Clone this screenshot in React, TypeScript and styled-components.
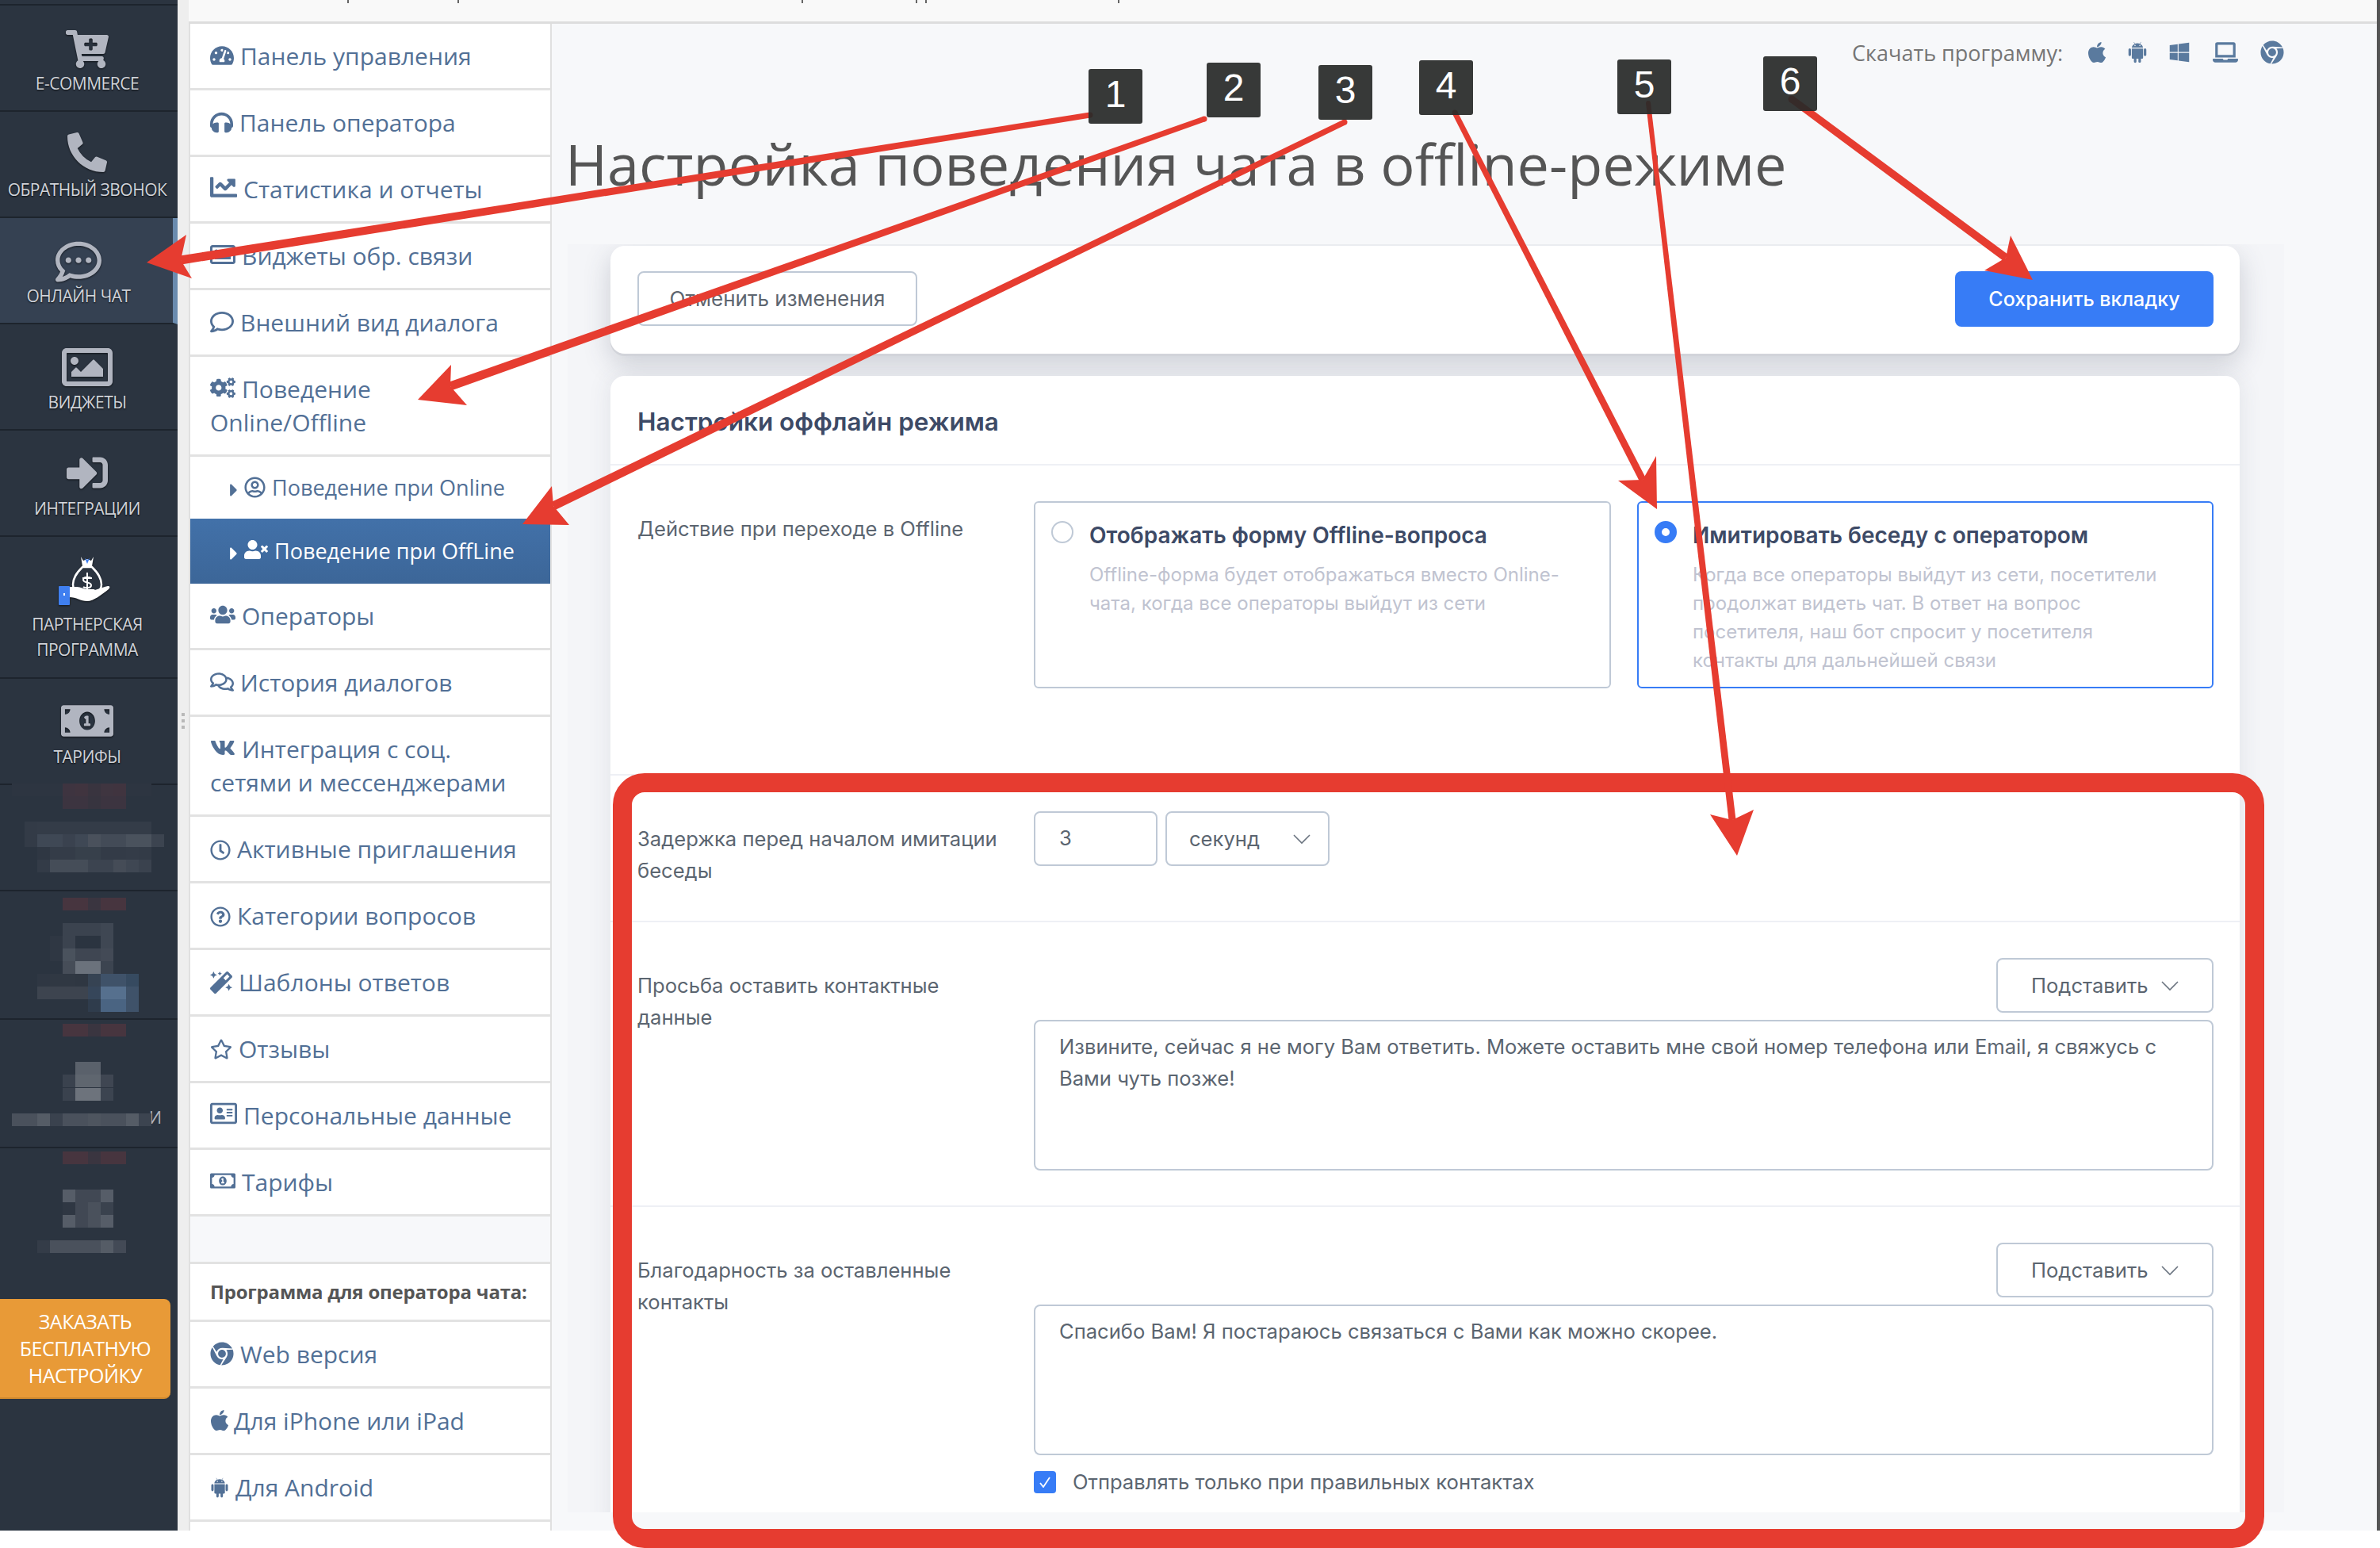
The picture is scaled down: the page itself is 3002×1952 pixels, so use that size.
import React from 'react';
import styled, { createGlobalStyle } from 'styled-components';
import {
  FaTachometerAlt, FaHeadphones, FaChartLine, FaRegImage, FaRegComment, FaCogs, FaRegUserCircle, FaUserTimes,
  FaUsers, FaRegComments, FaVk, FaRegClock, FaRegQuestionCircle, FaMagic, FaRegStar, FaRegAddressCard,
  FaRegMoneyBillAlt, FaChrome, FaApple, FaWindows, FaLaptop, FaCaretRight, FaCartPlus, FaPhoneAlt,
  FaRegCommentDots, FaSignInAlt, FaMoneyBillAlt,
} from 'react-icons/fa';
import { AiFillAndroid } from 'react-icons/ai';

const GlobalStyle = createGlobalStyle`
  html, body { margin: 0; padding: 0; background: #fff; }
  * { box-sizing: border-box; }
`;

const Page = styled.div`
  position: relative;
  width: 3002px;
  height: 1952px;
  overflow: hidden;
  background: #fff;
`;

const Shell = styled.div`
  display: flex;
  height: 1930px;
  overflow: hidden;
  border-right: 4px solid #555;
`;

/* left dark rail */
const Rail = styled.aside`
  position: relative;
  flex: 0 0 224px;
  background: #2b3440;
  font-family: 'Open Sans', sans-serif;
`;

const RailList = styled.div`
  display: flex;
  flex-direction: column;
  margin-top: -127px;
`;

const RailItem = styled.div<{ $h: number; $active?: boolean }>`
  height: ${p => p.$h}px;
  display: flex;
  flex-direction: column;
  align-items: center;
  padding-top: 31px;
  padding-right: ${p => (p.$active ? '20px' : '4px')};
  background: ${p => (p.$active ? '#354152' : 'transparent')};
  border-bottom: 2px solid #1d242d;
  border-right: ${p => (p.$active ? '6px solid #6a8bae' : '0')};
  color: #b1b5c0;
  svg { filter: drop-shadow(0 1px 1px rgba(0, 0, 0, 0.6)); }
`;

const RailLabel = styled.span`
  margin-top: 3px;
  font-size: 21px;
  line-height: 32px;
  letter-spacing: -0.5px;
  color: #d0d3d9;
  text-align: center;
  text-transform: uppercase;
  white-space: pre-line;
  text-shadow: 0 1px 2px rgba(0, 0, 0, 0.8);
`;

const RailIconBox = styled.span<{ $h?: number; $lift?: number }>`
  height: ${p => p.$h ?? 48}px;
  padding-bottom: ${p => p.$lift ?? 0}px;
  display: flex;
  align-items: center;
  justify-content: center;
`;

const BlurTail = styled.span`
  align-self: flex-end;
  margin-top: 76px;
  padding-right: 16px;
  font-size: 21px;
  line-height: 32px;
  color: #b1b5c0;
`;

const MosaicLayer = styled.svg`
  position: absolute;
  left: 0;
  top: 0;
`;

const OrderButton = styled.div`
  position: absolute;
  left: 0;
  top: 1638px;
  width: 215px;
  height: 126px;
  display: flex;
  align-items: center;
  justify-content: center;
  text-align: center;
  background: #e89a37;
  border-bottom: 2px solid #d28a2e;
  border-radius: 0 8px 8px 0;
  color: #fff;
  font-size: 25px;
  line-height: 34px;
  letter-spacing: -0.5px;
`;

const Gutter = styled.div`
  position: relative;
  flex: 0 0 14px;
  background: #eee;
`;

const GripDots = styled.div`
  position: absolute;
  left: 5px;
  top: 899px;
  width: 4px;
  height: 20px;
  background: repeating-linear-gradient(#b9b9b9 0 4px, transparent 4px 8px);
`;

const Workspace = styled.div`
  flex: 1;
  display: flex;
  flex-direction: column;
  min-width: 0;
`;

const TopStrip = styled.div`
  flex: 0 0 30px;
  display: flex;
  align-items: flex-start;
  background: #f9f9f9;
  border-bottom: 3px solid #ddd;
`;

/* the page above was cropped: only the feet of a few letters stay visible */
const LetterFoot = styled.span<{ $left: number }>`
  flex: none;
  width: 2px;
  height: 4px;
  margin-left: ${p => p.$left}px;
  background: #666;
`;

const Columns = styled.div`
  flex: 1;
  display: flex;
  min-height: 0;
`;

const Menu = styled.nav`
  flex: 0 0 456px;
  background: #f7f8fa;
  border-left: 2px solid #e0e0e0;
  border-right: 2px solid #e0e0e0;
  font-family: 'Open Sans', sans-serif;
`;

const MenuItem = styled.a<{ $sub?: boolean; $active?: boolean; $h?: number }>`
  display: block;
  padding: ${p => (p.$active ? '20px 0 16px 42px' : p.$sub ? '18px 0 18px 42px' : '20px 24px 19px 25px')};
  height: ${p => (p.$h ? `${p.$h}px` : 'auto')};
  width: ${p => (p.$active ? '454px' : 'auto')};
  background: ${p => (p.$active ? 'linear-gradient(#4271a9, #3c6698)' : '#fff')};
  border-bottom: ${p => (p.$sub ? '0' : '3px solid #e2e2e2')};
  color: ${p => (p.$active ? '#fff' : '#527096')};
  font-size: ${p => (p.$sub ? 27 : 30)}px;
  line-height: 42px;
  white-space: ${p => (p.$sub ? 'nowrap' : 'normal')};
  svg {
    vertical-align: -3px;
    margin-right: 8px;
  }
`;

const Caret = styled(FaCaretRight)`
  && { margin-right: 0; vertical-align: -6px; }
`;

const AppleGlyph = styled(FaApple)`
  && { margin: 0 3px 0 -3px; }
`;

const AndroidGlyph = styled(AiFillAndroid)`
  && { margin: 0 6px 0 -2px; }
`;

const MenuGap = styled.div`
  height: 57px;
`;

const MenuHeading = styled.div`
  height: 76px;
  padding: 0 0 0 25px;
  background: #fff;
  border-top: 3px solid #e2e2e2;
  border-bottom: 3px solid #e2e2e2;
  color: #555;
  font-size: 24px;
  font-weight: 700;
  line-height: 70px;
  letter-spacing: -0.2px;
`;

const Main = styled.main`
  flex: 1;
  min-width: 0;
  background: #f7f8fa;
  font-family: Inter, sans-serif;
`;

const DownloadBar = styled.div`
  display: flex;
  justify-content: flex-end;
  align-items: center;
  height: 44px;
  margin-top: 14px;
  padding-right: 117px;
  color: #5a7a9e;
`;

const DownloadLabel = styled.span`
  margin-right: 28px;
  font-family: 'Open Sans', sans-serif;
  font-size: 27px;
  color: #757575;
`;

const DownloadIcon = styled.span<{ $gap: number }>`
  display: flex;
  margin-right: ${p => p.$gap}px;
`;

const Title = styled.h1`
  margin: 70px 0 0 17px;
  font-family: 'Open Sans', sans-serif;
  font-size: 72px;
  font-weight: 400;
  line-height: 96px;
  color: #555;
`;

const Panel = styled.section`
  height: 1599px;
  margin: 54px 117px 0 20px;
  padding: 2px 56px 0 54px;
  overflow: hidden;
  background: #f4f5f8;
`;

const Card = styled.div`
  background: #fff;
  border-radius: 18px;
  box-shadow: 0 3px 0 #d2d4da, 0 12px 34px rgba(60, 70, 90, 0.22);
`;

const ActionCard = styled(Card)`
  height: 136px;
  display: flex;
  justify-content: space-between;
  padding: 32px 33px 0 34px;
`;

const OutlineButton = styled.button`
  width: 353px;
  height: 69px;
  background: #fff;
  border: 2px solid #bfc9d6;
  border-radius: 8px;
  font: 26px Inter, sans-serif;
  color: #5e6670;
`;

const SaveButton = styled.button`
  width: 326px;
  height: 70px;
  background: #377cf6;
  border: 0;
  border-radius: 8px;
  font: 500 25px Inter, sans-serif;
  color: #fff;
`;

const SettingsCard = styled(Card)`
  margin-top: 28px;
  box-shadow: 0 0 30px rgba(60, 70, 90, 0.1);
`;

const CardHeader = styled.h2`
  height: 113px;
  margin: 0;
  padding: 0 34px;
  border-bottom: 2px solid #eef0f5;
  font-size: 31.5px;
  font-weight: 600;
  line-height: 116px;
  color: #3d4a66;
`;

const Row = styled.div<{ $h: number }>`
  display: grid;
  grid-template-columns: 500px 1fr;
  height: ${p => p.$h}px;
  padding: 45px 33px 0 34px;
  border-bottom: 2px solid #eef0f5;
`;

const RowLabel = styled.div`
  padding-top: 15px;
  padding-right: 30px;
  font-size: 25.6px;
  line-height: 40px;
  color: #5b6570;
`;

const Field = styled.div`
  display: flex;
  flex-direction: column;
  min-width: 0;
`;

const ChoiceGrid = styled.div`
  display: grid;
  grid-template-columns: 728px 727px;
  gap: 33px;
`;

const ChoiceCard = styled.div<{ $on?: boolean }>`
  position: relative;
  height: 236px;
  padding: 21px 40px 0 68px;
  border: 2px solid ${p => (p.$on ? '#377cf6' : '#bfc9d6')};
  border-radius: 6px;
`;

const Radio = styled.span<{ $on?: boolean }>`
  position: absolute;
  left: 20px;
  top: 23px;
  width: 28px;
  height: 28px;
  border-radius: 50%;
  background: #fff;
  border: ${p => (p.$on ? '9px solid #377cf6' : '2px solid #bfc9d6')};
`;

const ChoiceTitle = styled.div`
  font-size: 28px;
  font-weight: 600;
  line-height: 40px;
  color: #3d4a66;
`;

const ChoiceText = styled.div`
  margin-top: 12px;
  font-size: 24px;
  line-height: 36px;
  color: #c0c3d0;
`;

const Inline = styled.div`
  display: flex;
  gap: 10px;
`;

const TextInput = styled.div`
  width: 156px;
  height: 69px;
  padding-left: 30px;
  border: 2px solid #bfc9d6;
  border-radius: 8px;
  font-size: 25.6px;
  line-height: 63px;
  color: #5b6570;
`;

const SelectBox = styled.div`
  position: relative;
  display: flex;
  align-items: center;
  justify-content: space-between;
  width: 207px;
  height: 69px;
  padding: 0 22px 0 28px;
  border: 2px solid #bfc9d6;
  border-radius: 8px;
  font-size: 25.6px;
  color: #5b6570;
`;

const Chevron = () => (
  <svg width="22" height="14" viewBox="0 0 22 14" fill="none" stroke="#6b7480" strokeWidth="1.6">
    <path d="M1 2l10 10L21 2" />
  </svg>
);

const InsertButton = styled.div`
  align-self: flex-end;
  display: flex;
  align-items: center;
  justify-content: space-between;
  width: 274px;
  height: 69px;
  padding: 0 42px;
  border: 2px solid #bfc9d6;
  border-radius: 8px;
  font-size: 25.6px;
  color: #5b6570;
`;

const TextBox = styled.div`
  height: 190px;
  margin-top: 9px;
  padding: 12px 30px;
  border: 2px solid #bfc9d6;
  border-radius: 8px;
  font-size: 25.6px;
  line-height: 40px;
  color: #5b6570;
`;

const CheckRow = styled.div`
  display: flex;
  align-items: center;
  gap: 21px;
  margin-top: 16px;
  font-size: 25.6px;
  line-height: 36px;
  color: #5b6570;
`;

const CheckBox = styled.span`
  display: flex;
  align-items: center;
  justify-content: center;
  width: 28px;
  height: 28px;
  border-radius: 4px;
  background: #377cf6;
`;

/* annotations drawn over the screenshot */
const RedFrame = styled.div`
  position: absolute;
  left: 773px;
  top: 975px;
  width: 2083px;
  height: 977px;
  border: 24px solid #e63c30;
  border-radius: 40px;
  pointer-events: none;
`;

const ArrowLayer = styled.svg`
  position: absolute;
  left: 0;
  top: 0;
`;

const Badge = styled.div<{ $x: number; $y: number }>`
  position: absolute;
  left: ${p => p.$x}px;
  top: ${p => p.$y}px;
  width: 68px;
  height: 69px;
  border-radius: 3px;
  background: rgba(40, 42, 41, 0.93);
  color: #fff;
  font: 48px/64px 'Liberation Sans', Arial, sans-serif;
  text-align: center;
`;

type Pt = [number, number];

const Arrow = ({ from, tip, a, b, notch, w0 = 7, w1 = 11 }: { from: Pt; tip: Pt; a: Pt; b: Pt; notch: Pt; w0?: number; w1?: number }) => {
  const dx = notch[0] - from[0];
  const dy = notch[1] - from[1];
  const len = Math.hypot(dx, dy);
  const nx = -dy / len;
  const ny = dx / len;
  const shaft = [
    [from[0] + (nx * w0) / 2, from[1] + (ny * w0) / 2],
    [notch[0] + (nx * w1) / 2, notch[1] + (ny * w1) / 2],
    [notch[0] - (nx * w1) / 2, notch[1] - (ny * w1) / 2],
    [from[0] - (nx * w0) / 2, from[1] - (ny * w0) / 2],
  ];
  return (
    <g fill="#e63c30">
      <circle cx={from[0]} cy={from[1]} r={w0 / 2} />
      <polygon points={shaft.map(p => p.join(',')).join(' ')} />
      <polygon points={[tip, a, notch, b].map(p => p.join(',')).join(' ')} />
    </g>
  );
};

/* pixelated (censored) part of the rail: y, x, colours per 16px cell */
const mosaic: [number, number, string][] = [
  [988, 15, '2d3541 2d3541 2d3541 2d3541 3e3440 40343f 39343f 3f3540 40343f 2d3541 2d3541'],
  [1004, 79, '3c3440 3c3440 37343f 3c3440 3c3440'],
  [1036, 31, '333b47 343c48 343c48 343c48 343c48 343c48 343c48 343c48 343c48 343c48'],
  [1052, 31, '333b47 3f4855 3f4855 3a424f 3f4855 4a515c 434b57 434b57 4a525d 4a525d 3c4450'],
  [1068, 47, '2f3743 343c48 343c48 37404b 37404b 333b47 333b47 343c48 333b47'],
  [1084, 47, '333b47 454d58 454d58 454d58 3c4450 3c4450 454c57 3f4753 3a424e'],
  [1132, 79, '47353f 47353f 3a3540 47353f 47353f'],
  [1164, 79, '3b434f 3b434f 3b434f 3f4753'],
  [1180, 63, '2f3743 3b434f 2b3440 2b3440 3f4753'],
  [1196, 63, '2f3743 4a525d 3f4652 3f4652 434a56'],
  [1212, 79, '464d58 6b727c 6b727c 3c4450'],
  [1228, 47, '2f3743 303843 303843 2f3742 364353 3f5269 3f5269 364a60'],
  [1244, 47, '3d444f 3d444f 3d444f 3d444f 36465a 56708e 56708e 3f5269'],
  [1260, 111, '2f3c4c 4a6482 4a6482 3f5269'],
  [1291, 79, '47353f 47353f 3a3540 47353f 47353f'],
  [1339, 95, '5a616b 5a616b'],
  [1355, 79, '3a424e 5f666f 5f666f 3f4652'],
  [1372, 79, '3a424e 6d737c 6d737c 3c4450'],
  [1404, 15, '4a515c 4a515c 555c66 3a424e 4a515c 4a515c 4e555f 4a515c 4a515c 555c66 3c4450'],
  [1452, 79, '47353f 47353f 3a3540 47353f 47353f'],
  [1500, 79, '565d68 414854 414854 565d68'],
  [1516, 79, '2f3743 414854 4a515c 3a424e'],
  [1532, 79, '565d68 414854 4a515c 565d68'],
  [1564, 47, '343c48 4a515c 4a515c 4a515c 4a515c 555c66 434a56'],
];

const RailMosaic = () => (
  <MosaicLayer width="224" height="1930" viewBox="0 0 224 1930">
    {mosaic.flatMap(([y, x, cells]) =>
      cells.split(' ').map((c, i) => <rect key={`${y}-${i}`} x={x + i * 16} y={y} width="16" height="16" fill={`#${c}`} />),
    )}
  </MosaicLayer>
);

/* hand holding a money bag, the rail's partner icon */
const PartnerIcon = () => (
  <svg width="72" height="72" viewBox="0 0 72 72">
    <path d="M28 0l3 5 5-2 5 2 3-5-2 12H30z" fill="#fff" />
    <path d="M33 2l3 7 3-7-3 2z" fill="#3f7ff0" />
    <path d="M30 13h12c8 8 12 14 12 22 0 6-3 9-8 10H26c-5-1-8-4-8-10 0-8 4-14 12-22z" fill="#2b3440" stroke="#fff" strokeWidth="2.5" />
    <path d="M30 27h12M36 20v22M31 38c2 2 10 2 10-2 0-5-10-2-10-7 0-4 8-4 10-2" fill="none" stroke="#fff" strokeWidth="2" />
    <path d="M13 38h10c5 0 8 3 13 3h8c3 0 3 4 0 4h-8l13-4c5-2 9-3 13-4 3 0 3 2 1 4-9 7-19 15-27 15-9 0-13-5-23-5z" fill="#fff" />
    <rect x="0" y="37" width="14" height="24" rx="1" fill="#3f7ff0" />
    <rect x="6" y="46" width="2" height="3" fill="#fff" />
  </svg>
);

const menuTop: [React.ReactNode, React.ReactNode][] = [
  [<FaTachometerAlt size={30} />, 'Панель управления'],
  [<FaHeadphones size={29} />, 'Панель оператора'],
  [<FaChartLine size={34} />, 'Статистика и отчеты'],
  [<FaRegImage size={32} />, 'Виджеты обр. связи'],
  [<FaRegComment size={30} />, 'Внешний вид диалога'],
  [<FaCogs size={32} />, 'Поведение Online/Offline'],
];

const menuBottom: [React.ReactNode, React.ReactNode][] = [
  [<FaUsers size={32} />, 'Операторы'],
  [<FaRegComments size={30} />, 'История диалогов'],
  [<FaVk size={32} />, 'Интеграция с соц. сетями и мессенджерами'],
  [<FaRegClock size={26} />, 'Активные приглашения'],
  [<FaRegQuestionCircle size={26} />, 'Категории вопросов'],
  [<FaMagic size={28} />, 'Шаблоны ответов'],
  [<FaRegStar size={28} />, 'Отзывы'],
  [<FaRegAddressCard size={34} />, 'Персональные данные'],
  [<FaRegMoneyBillAlt size={32} />, 'Тарифы'],
];

const menuApps: [React.ReactNode, React.ReactNode][] = [
  [<FaChrome size={30} />, 'Web версия'],
  [<AppleGlyph size={30} />, 'Для iPhone или iPad'],
  [<AndroidGlyph size={28} />, 'Для Android'],
];

const letterFeet = [200, 137, 432, 142, 10, 241];

export default function App() {
  return (
    <Page>
      <GlobalStyle />
      <Shell>
        <Rail>
          <RailList>
            <RailItem $h={134} />
            <RailItem $h={134}>
              <RailIconBox><FaCartPlus size={54} /></RailIconBox>
              <RailLabel>E-commerce</RailLabel>
            </RailItem>
            <RailItem $h={134}>
              <RailIconBox $lift={8}><FaPhoneAlt size={50} /></RailIconBox>
              <RailLabel>Обратный звонок</RailLabel>
            </RailItem>
            <RailItem $h={134} $active>
              <RailIconBox><FaRegCommentDots size={58} /></RailIconBox>
              <RailLabel>Онлайн чат</RailLabel>
            </RailItem>
            <RailItem $h={134}>
              <RailIconBox $lift={2}><FaRegImage size={64} /></RailIconBox>
              <RailLabel>Виджеты</RailLabel>
            </RailItem>
            <RailItem $h={134}>
              <RailIconBox $lift={4}><FaSignInAlt size={52} /></RailIconBox>
              <RailLabel>Интеграции</RailLabel>
            </RailItem>
            <RailItem $h={179}>
              <RailIconBox $h={60}><PartnerIcon /></RailIconBox>
              <RailLabel>{'Партнерская\nпрограмма'}</RailLabel>
            </RailItem>
            <RailItem $h={134}>
              <RailIconBox $lift={4}><FaMoneyBillAlt size={66} /></RailIconBox>
              <RailLabel>Тарифы</RailLabel>
            </RailItem>
            <RailItem $h={134} />
            <RailItem $h={162} />
            <RailItem $h={162}><BlurTail>И</BlurTail></RailItem>
          </RailList>
          <RailMosaic />
          <OrderButton>ЗАКАЗАТЬ<br />БЕСПЛАТНУЮ<br />НАСТРОЙКУ</OrderButton>
        </Rail>
        <Gutter><GripDots /></Gutter>
        <Workspace>
          <TopStrip>
            {letterFeet.map((left, i) => (
              <LetterFoot key={i} $left={left} />
            ))}
          </TopStrip>
          <Columns>
            <Menu>
              {menuTop.map(([icon, text], i) => (
                <MenuItem key={i}>{icon}{text}</MenuItem>
              ))}
              <MenuItem $sub $h={78}><Caret size={26} /><FaRegUserCircle size={27} />Поведение при Online</MenuItem>
              <MenuItem $sub $active $h={82}><Caret size={26} /><FaUserTimes size={30} />Поведение при OffLine</MenuItem>
              {menuBottom.map(([icon, text], i) => (
                <MenuItem key={i}>{icon}{text}</MenuItem>
              ))}
              <MenuGap />
              <MenuHeading>Программа для оператора чата:</MenuHeading>
              {menuApps.map(([icon, text], i) => (
                <MenuItem key={i}>{icon}{text}</MenuItem>
              ))}
              <MenuItem />
            </Menu>
            <Main>
              <DownloadBar>
                <DownloadLabel>Скачать программу:</DownloadLabel>
                <DownloadIcon $gap={21}><FaApple size={30} /></DownloadIcon>
                <DownloadIcon $gap={24}><AiFillAndroid size={30} /></DownloadIcon>
                <DownloadIcon $gap={28}><FaWindows size={28} /></DownloadIcon>
                <DownloadIcon $gap={28}><FaLaptop size={32} /></DownloadIcon>
                <DownloadIcon $gap={0}><FaChrome size={30} /></DownloadIcon>
              </DownloadBar>
              <Title>Настройка поведения чата в offline-режиме</Title>
              <Panel>
                <ActionCard>
                  <OutlineButton>Отменить изменения</OutlineButton>
                  <SaveButton>Сохранить вкладку</SaveButton>
                </ActionCard>
                <SettingsCard>
                  <CardHeader>Настройки оффлайн режима</CardHeader>
                  <Row $h={391}>
                    <RowLabel>Действие при переходе в Offline</RowLabel>
                    <ChoiceGrid>
                      <ChoiceCard>
                        <Radio />
                        <ChoiceTitle>Отображать форму Offline-вопроса</ChoiceTitle>
                        <ChoiceText>Offline-форма будет отображаться вместо Online-чата, когда все операторы выйдут из сети</ChoiceText>
                      </ChoiceCard>
                      <ChoiceCard $on>
                        <Radio $on />
                        <ChoiceTitle>Имитировать беседу с оператором</ChoiceTitle>
                        <ChoiceText>Когда все операторы выйдут из сети, посетители продолжат видеть чат. В ответ на вопрос посетителя, наш бот спросит у посетителя контакты для дальнейшей связи</ChoiceText>
                      </ChoiceCard>
                    </ChoiceGrid>
                  </Row>
                  <Row $h={185}>
                    <RowLabel>Задержка перед началом имитации беседы</RowLabel>
                    <Field>
                      <Inline>
                        <TextInput>3</TextInput>
                        <SelectBox>секунд<Chevron /></SelectBox>
                      </Inline>
                    </Field>
                  </Row>
                  <Row $h={359}>
                    <RowLabel>Просьба оставить контактные данные</RowLabel>
                    <Field>
                      <InsertButton>Подставить<Chevron /></InsertButton>
                      <TextBox>Извините, сейчас я не могу Вам ответить. Можете оставить мне свой номер телефона или Email, я свяжусь с Вами чуть позже!</TextBox>
                    </Field>
                  </Row>
                  <Row $h={420}>
                    <RowLabel>Благодарность за оставленные контакты</RowLabel>
                    <Field>
                      <InsertButton>Подставить<Chevron /></InsertButton>
                      <TextBox>Спасибо Вам! Я постараюсь связаться с Вами как можно скорее.</TextBox>
                      <CheckRow>
                        <CheckBox>
                          <svg width="16" height="14" viewBox="0 0 16 14" fill="none" stroke="#fff" strokeWidth="1.8">
                            <path d="M2 8l4 5L14 1" />
                          </svg>
                        </CheckBox>
                        Отправлять только при правильных контактах
                      </CheckRow>
                    </Field>
                  </Row>
                </SettingsCard>
              </Panel>
            </Main>
          </Columns>
        </Workspace>
      </Shell>
      <RedFrame />
      <ArrowLayer width="3002" height="1952" viewBox="0 0 3002 1952">
        <Arrow from={[1375, 145]} tip={[185, 331]} a={[235, 296]} b={[242, 351]} notch={[228, 328]} />
        <Arrow from={[1519, 150]} tip={[527, 504]} a={[569, 460]} b={[589, 511]} notch={[568, 487]} />
        <Arrow from={[1696, 154]} tip={[659, 661]} a={[696, 613]} b={[718, 662]} notch={[698, 638]} />
        <Arrow from={[1835, 142]} tip={[2090, 642]} a={[2041, 606]} b={[2089, 575]} notch={[2072, 605]} w0={7} w1={9} />
        <Arrow from={[2079, 130]} tip={[2191, 1079]} a={[2157, 1027]} b={[2212, 1021]} notch={[2185, 1034]} w0={6} w1={9} />
        <Arrow from={[2260, 125]} tip={[2564, 353]} a={[2536, 297]} b={[2503, 341]} notch={[2530, 325]} w0={9} w1={10} />
      </ArrowLayer>
      <Badge $x={1373} $y={87}>1</Badge>
      <Badge $x={1522} $y={79}>2</Badge>
      <Badge $x={1663} $y={82}>3</Badge>
      <Badge $x={1790} $y={76}>4</Badge>
      <Badge $x={2040} $y={75}>5</Badge>
      <Badge $x={2224} $y={71}>6</Badge>
    </Page>
  );
}
